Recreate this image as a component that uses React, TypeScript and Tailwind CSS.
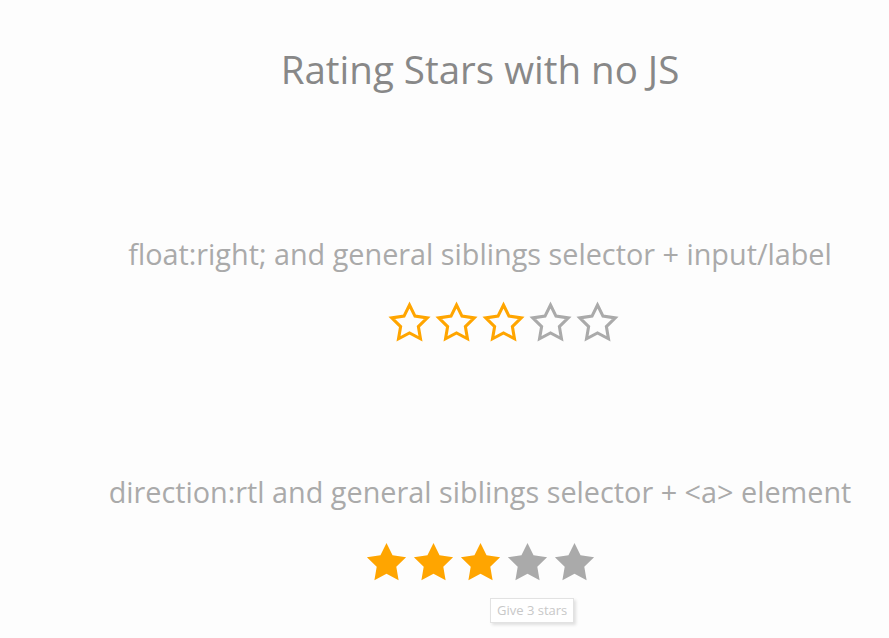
import React from 'react';

const SMALL = 'M12 2.6l2.86 5.8 6.4.93-4.63 4.51 1.09 6.37L12 17.2l-5.72 3.01 1.09-6.37L2.74 9.33l6.4-.93L12 2.6z';
const BIG = 'M12 2l3.09 6.26L22 9.27l-5 4.87 1.18 6.88L12 17.77l-6.18 3.25L7 14.14 2 9.27l6.91-1.01L12 2z';

const OutlineStar = ({ on }: { on: boolean }) => (
  <svg viewBox="0 0 24 24" className="w-[47px] h-[46px] shrink-0">
    <path d={SMALL} fill="none" stroke={on ? '#ffa500' : '#aaaaaa'} strokeWidth={1.6} strokeLinejoin="miter" />
  </svg>
);

const FilledStar = ({ on }: { on: boolean }) => (
  <svg viewBox="0 0 24 24" className="w-[47px] h-[47px] shrink-0">
    <path d={BIG} fill={on ? '#ffa500' : '#aaaaaa'} />
  </svg>
);

export default function App() {
  const rating = 3;
  return (
    <div className="min-h-[638px] w-full bg-[#fdfdfd] pl-[71px] font-['Open_Sans',sans-serif] overflow-hidden">
      <h1 className="pt-[43px] text-center text-[38.5px] leading-[52px] text-[#888888] font-normal">
        Rating Stars with no JS
      </h1>

      {/* float:right version */}
      <section className="mt-[140px] text-center">
        <h2 className="text-[28.8px] leading-[38px] text-[#aaaaaa]">
          float:right; and general siblings selector + input/label
        </h2>
        <div className="mt-[27px] flex justify-center pl-[46px]">
          {[1, 2, 3, 4, 5].map((n) => (
            <OutlineStar key={n} on={n <= rating} />
          ))}
        </div>
      </section>

      {/* direction:rtl version */}
      <section className="mt-[127px] text-center">
        <h2 className="text-[28.8px] leading-[38px] text-[#aaaaaa]">
          direction:rtl and general siblings selector + &lt;a&gt; element
        </h2>
        <div className="mt-[28px] flex justify-center">
          {[1, 2, 3, 4, 5].map((n) => (
            <FilledStar key={n} on={n <= rating} />
          ))}
        </div>
        <div className="relative h-[40px]">
          <span className="absolute left-[419px] top-[12px] border border-[#e2e2e2] bg-white px-[6px] py-[2px] text-[13px] leading-[19px] text-[#c8c8c8] shadow-[2px_2px_3px_rgba(0,0,0,0.12)]">
            Give 3 stars
          </span>
        </div>
      </section>
    </div>
  );
}
